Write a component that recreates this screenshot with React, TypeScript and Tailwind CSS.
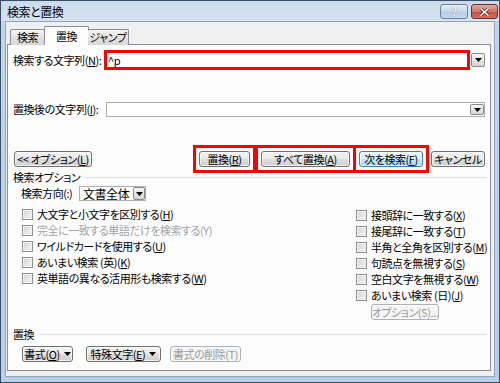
import React from "react";

const font = "font-['Noto_Sans_CJK_JP',sans-serif] [font-feature-settings:'palt']";

const Arrow = () => (
  <svg width="7" height="4" viewBox="0 0 7 4">
    <path d="M0 0h7L3.5 4z" fill="#000" />
  </svg>
);

const DropBtn = ({ className = "" }: { className?: string }) => (
  <div
    className={`shrink-0 flex items-center justify-center border border-[#8a8a8a] rounded-[2px] bg-[linear-gradient(#f7f7f7,#e4e4e4_50%,#d6d6d6)] ${className}`}
  >
    <Arrow />
  </div>
);

type BtnProps = {
  children: React.ReactNode;
  className?: string;
  kind?: "normal" | "default" | "disabled";
};

const Btn = ({ children, className = "", kind = "normal" }: BtnProps) => {
  const look =
    kind === "default"
      ? "border-[#3c7fb1] bg-[linear-gradient(#eaf6fd,#d9f0fc_50%,#bee6fd_51%,#a7d9f5)] text-black"
      : kind === "disabled"
        ? "border-[#adb2b5] bg-[#f4f4f4] text-[#9a9a9a]"
        : "border-[#707070] bg-[linear-gradient(#f2f2f2,#ebebeb_50%,#dddddd_51%,#cfcfcf)] text-black";
  return (
    <div
      className={`shrink-0 h-[16px] flex items-center justify-center whitespace-nowrap rounded-[3px] border shadow-[inset_0_0_0_1px_rgba(255,255,255,0.7)] ${look} ${className}`}
    >
      {children}
    </div>
  );
};

const Check = ({ children, disabled = false }: { children: React.ReactNode; disabled?: boolean }) => (
  <div className="h-[16px] flex items-center">
    <span className="shrink-0 w-[11px] h-[11px] border border-[#8e8f8f] bg-[linear-gradient(135deg,#d4d4d4,#f4f4f4)] shadow-[inset_0_0_0_1px_#f4f4f4]" />
    <span className={`ml-[4px] whitespace-nowrap ${disabled ? "text-[#a3a3a3]" : "text-black"}`}>{children}</span>
  </div>
);

const GroupLabel = ({ text }: { text: string }) => (
  <div className="h-[12px] flex items-center pl-[5px] pr-[3px]">
    <span className="whitespace-nowrap">{text}</span>
    <div className="ml-[5px] flex-1 h-px bg-[#d5dfe5]" />
  </div>
);

export default function App() {
  return (
    <div
      className={`w-[500px] h-[383px] flex flex-col border border-[#3a4d66] bg-[linear-gradient(#c4d6ea,#b9cfe6)] px-[4px] pb-[5px] text-[11px] leading-none tracking-[-0.45px] ${font}`}
    >
      {/* title bar */}
      <div className="h-[20px] flex items-start -mx-[4px] px-[1px] bg-[linear-gradient(#cbdbec,#d6e3f0)]">
        <span className="mt-[5px] ml-[5px] text-[12px] text-black">検索と置換</span>
        <div className="ml-auto mt-[3px] w-[28px] h-[15px] rounded-[3px] border border-[#6d83a0] bg-[linear-gradient(#e4edf6,#c8d8ea_50%,#b5cae1_51%,#c6d8ec)] flex items-center justify-center text-[11px] font-bold text-[#eef3f8] [text-shadow:0_0_1px_#4b5d75]">
          ?
        </div>
        <div className="ml-[3px] mt-[3px] w-[27px] h-[15px] rounded-[3px] border border-[#6c2f2a] bg-[linear-gradient(#e4a99c,#d07a68_50%,#c24f3a_51%,#d2735c)] flex items-center justify-center">
          <svg width="11" height="8" viewBox="0 0 11 8">
            <path d="M1.5 0.5 9.5 7.5M9.5 0.5 1.5 7.5" stroke="#5a2a24" strokeWidth="3" />
            <path d="M1.5 0.5 9.5 7.5M9.5 0.5 1.5 7.5" stroke="#fff" strokeWidth="1.6" />
          </svg>
        </div>
      </div>

      {/* client */}
      <div className="flex-1 flex flex-col border border-[#8ea4bd] bg-[#f0f0f0]">
        {/* tabs */}
        <div className="relative z-10 mt-[4px] ml-[4px] h-[19px] -mb-[1px] flex items-end">
          <div className="h-[16px] w-[35px] flex items-center justify-center border border-b-0 border-[#898c95] rounded-t-[2px] bg-[linear-gradient(#f3f3f3,#e3e3e3_50%,#d7d7d7)]">
            検索
          </div>
          <div className="h-[19px] w-[45px] -mx-[1px] flex items-center justify-center border border-b-0 border-[#898c95] rounded-t-[2px] bg-[#fcfcfc]">
            置換
          </div>
          <div className="h-[16px] w-[41px] flex items-center justify-center whitespace-nowrap border border-b-0 border-l-0 border-[#898c95] rounded-t-[2px] bg-[linear-gradient(#f3f3f3,#e3e3e3_50%,#d7d7d7)]">
            ジャンプ
          </div>
        </div>

        {/* panel */}
        <div className="flex-1 ml-[1px] mr-[3px] mb-[5px] border border-[#898c95] bg-[#fcfcfc] flex flex-col">
          {/* find */}
          <div className="mt-[5px] h-[20px] flex items-center">
            <span className="w-[96px] pl-[5px] whitespace-nowrap">
              検索する文字列(<u>N</u>):
            </span>
            <div className="w-[366px] h-[20px] border-[3px] border-[#ff0000] bg-white flex items-center pl-[1px] text-[11px]">
              ^p
            </div>
            <DropBtn className="ml-[1px] w-[14px] h-[14px]" />
          </div>

          {/* replace */}
          <div className="mt-[32px] h-[15px] flex items-center">
            <span className="w-[98px] pl-[5px] whitespace-nowrap">
              置換後の文字列(<u>I</u>):
            </span>
            <div className="w-[379px] h-[15px] border border-[#abadb3] bg-white flex items-center justify-end">
              <DropBtn className="w-[14px] h-[11px]" />
            </div>
          </div>

          {/* buttons */}
          <div className="mt-[34px] h-[16px] flex items-center">
            <Btn className="ml-[6px] w-[78px]">
              &lt;&lt; オプション(<u>L</u>)
            </Btn>
            <div className="ml-[107px] outline-3 outline-[#ff0000] outline-offset-3">
              <Btn className="w-[51px]">
                置換(<u>R</u>)
              </Btn>
            </div>
            <div className="ml-[11px] outline-3 outline-[#ff0000] outline-offset-3">
              <Btn className="w-[89px]">
                すべて置換(<u>A</u>)
              </Btn>
            </div>
            <div className="ml-[9px] outline-3 outline-[#ff0000] outline-offset-3">
              <Btn className="w-[64px]" kind="default">
                次を検索(<u>F</u>)
              </Btn>
            </div>
            <Btn className="ml-[8px] w-[54px]">キャンセル</Btn>
          </div>

          {/* search options */}
          <div className="mt-[4px]">
            <GroupLabel text="検索オプション" />
          </div>

          <div className="mt-[3px] flex">
            <div className="w-[348px] pl-[13px] flex flex-col">
              <div className="h-[15px] flex items-center">
                <span className="w-[58px] whitespace-nowrap">検索方向(:)</span>
                <div className="w-[67px] h-[15px] border border-[#abadb3] bg-white flex items-center justify-between pl-[3px] text-[12px]">
                  文書全体
                  <DropBtn className="w-[12px] h-[13px]" />
                </div>
              </div>
              <div className="mt-[5px] pl-[1px] flex flex-col">
                <Check>
                  大文字と小文字を区別する(<u>H</u>)
                </Check>
                <Check disabled>完全に一致する単語だけを検索する(Y)</Check>
                <Check>
                  ワイルドカードを使用する(<u>U</u>)
                </Check>
                <Check>
                  あいまい検索 (英)(<u>K</u>)
                </Check>
                <Check>
                  英単語の異なる活用形も検索する(<u>W</u>)
                </Check>
              </div>
            </div>
            <div className="pt-[21px] flex flex-col">
              <Check>
                接頭辞に一致する(<u>X</u>)
              </Check>
              <Check>
                接尾辞に一致する(<u>T</u>)
              </Check>
              <Check>
                半角と全角を区別する(<u>M</u>)
              </Check>
              <Check>
                句読点を無視する(<u>S</u>)
              </Check>
              <Check>
                空白文字を無視する(<u>W</u>)
              </Check>
              <Check>
                あいまい検索 (日)(<u>J</u>)
              </Check>
              <Btn className="mt-[1px] ml-[15px] w-[68px]" kind="disabled">
                オプション(S)...
              </Btn>
            </div>
          </div>

          {/* replace group */}
          <div className="mt-[8px]">
            <GroupLabel text="置換" />
          </div>
          <div className="mt-[6px] h-[16px] flex items-center">
            <Btn className="ml-[14px] w-[51px] border-[#555] gap-[4px]">
              <span>
                書式(<u>O</u>)
              </span>
              <Arrow />
            </Btn>
            <Btn className="ml-[13px] w-[75px] border-[#555] gap-[4px]">
              <span>
                特殊文字(<u>E</u>)
              </span>
              <Arrow />
            </Btn>
            <Btn className="ml-[9px] w-[71px]" kind="disabled">
              書式の削除(T)
            </Btn>
          </div>
        </div>
      </div>
    </div>
  );
}
